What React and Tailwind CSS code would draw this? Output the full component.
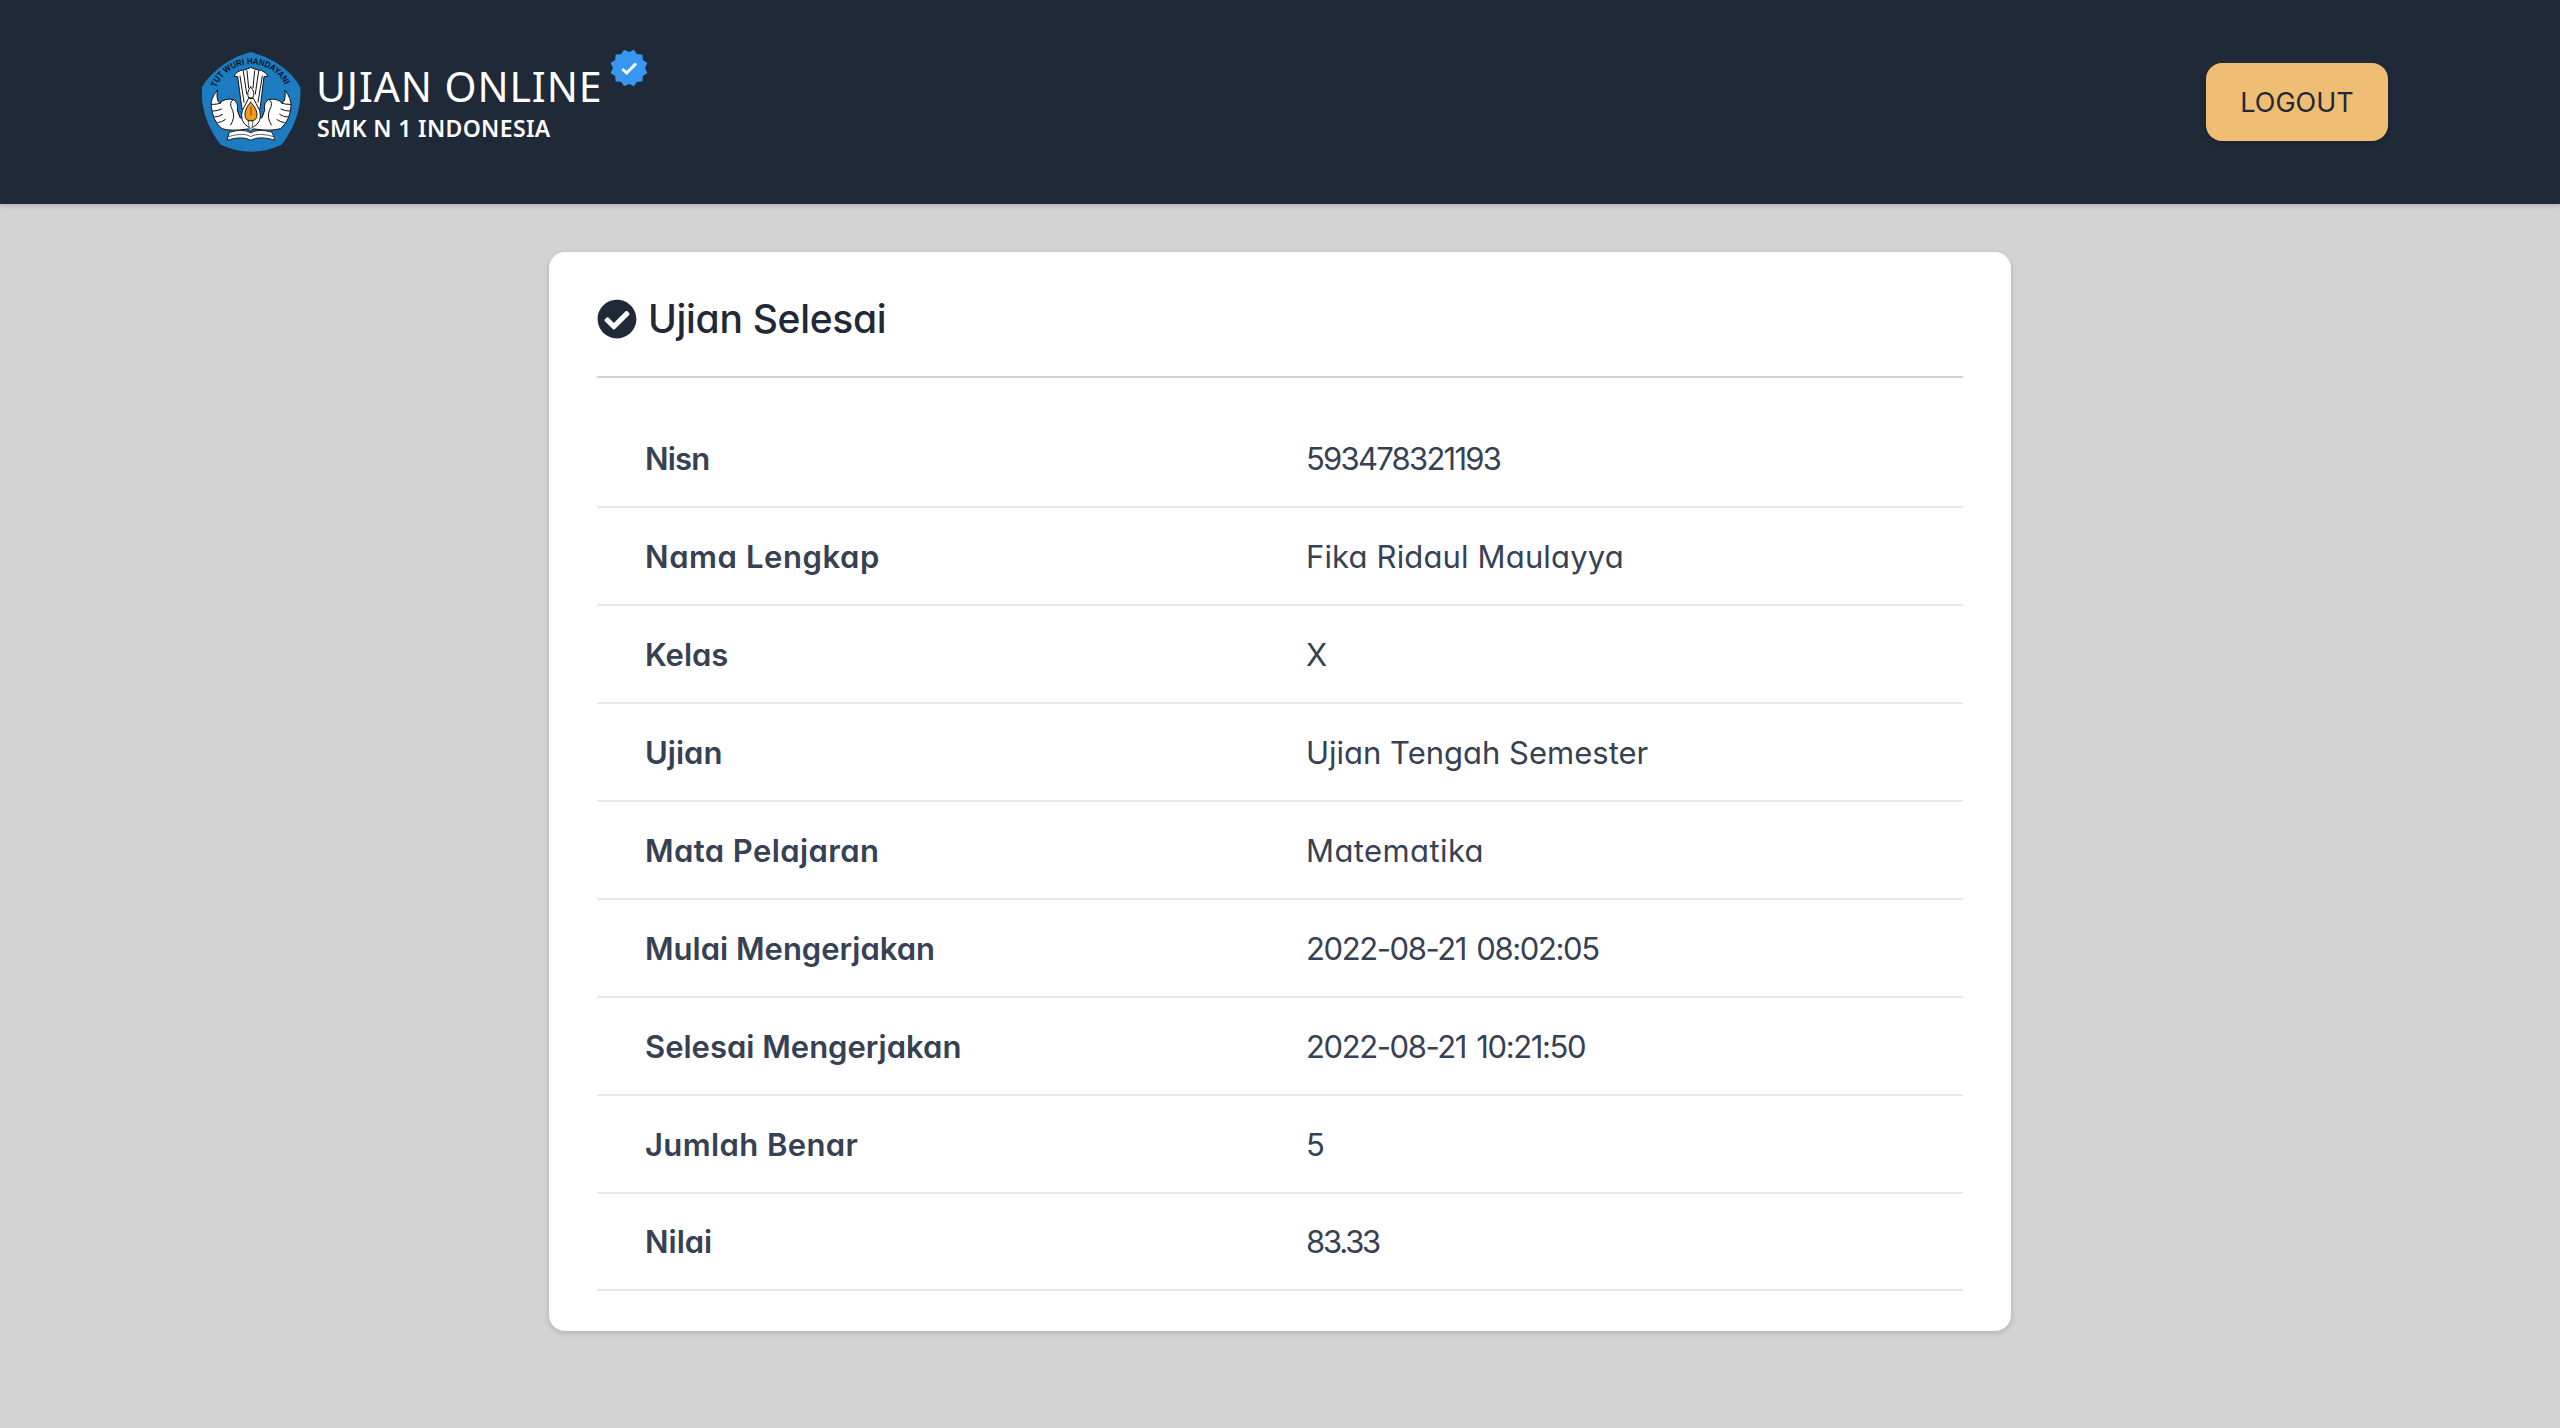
import React from "react";
import { FaCheckCircle } from "react-icons/fa";

const rows = [
  { label: "Nisn", value: "593478321193", labelFit: "tracking-[-0.8px]", valueFit: "tracking-[-1.75px]" },
  { label: "Nama Lengkap", value: "Fika Ridaul Maulayya", labelFit: "tracking-[0.6px]", valueFit: "tracking-[0.15px]" },
  { label: "Kelas", value: "X", labelFit: "", valueFit: "" },
  { label: "Ujian", value: "Ujian Tengah Semester", labelFit: "", valueFit: "" },
  { label: "Mata Pelajaran", value: "Matematika", labelFit: "tracking-[0.4px]", valueFit: "tracking-[0.4px]" },
  { label: "Mulai Mengerjakan", value: "2022-08-21 08:02:05", labelFit: "", valueFit: "tracking-[-1.4px] [word-spacing:3px]" },
  { label: "Selesai Mengerjakan", value: "2022-08-21 10:21:50", labelFit: "", valueFit: "tracking-[-1.4px] [word-spacing:3px]" },
  { label: "Jumlah Benar", value: "5", labelFit: "tracking-[0.4px]", valueFit: "" },
  { label: "Nilai", value: "83.33", labelFit: "", valueFit: "tracking-[-2.2px]" },
];

function Emblem() {
  return (
    <svg className="mb-[2px] h-[101px] w-[99px] shrink-0" viewBox="66 60 297 306" preserveAspectRatio="none">
      <path d="M212 63 Q285 82 334 132 Q352 152 361 170 Q366 262 305 344 Q260 365 212 365 Q168 365 122 344 Q60 262 66 170 Q76 150 94 132 Q142 82 212 63Z" fill="#1d7bc1" />
      <defs><path id="motto" d="M108 171 A113 113 0 0 1 318 171" /></defs>
      <text fontFamily="Liberation Sans, sans-serif" fontSize="27" fontWeight="700" fill="#0b1420">
        <textPath href="#motto" textLength="260" lengthAdjust="spacingAndGlyphs">TUT WURI HANDAYANI</textPath>
      </text>
      <g stroke="#111" strokeWidth="3" strokeLinejoin="round" strokeLinecap="round" fill="#fff">
        <path d="M162 136 Q168 122 182 119 L198 116 L212 110 L228 116 L244 119 Q258 124 264 136 L252 138 L240 236 L186 236 L173 138Z" />
        <path d="M180 136 L192 215 M190 120 L200 190 M201 120 L206 172 M224 120 L219 172 M236 120 L226 190 M247 136 L234 215" fill="none" />
        <path d="M112 179 Q90 205 94 228 Q97 270 125 295 Q150 304 205 296 L212 302 L220 296 Q275 304 302 295 Q330 270 333 228 Q335 205 315 179 Q318 212 306 218 Q292 202 266 207 Q250 216 254 240 L246 262 L212 270 L180 262 L172 240 Q176 216 160 207 Q134 202 120 218 Q108 212 112 179Z" />
        <path d="M94 222 Q112 222 122 218 M98 242 Q112 242 124 236 M104 260 Q116 260 128 252 M114 277 Q124 276 136 268 M333 222 Q315 222 305 218 M329 242 Q315 242 303 236 M323 260 Q311 260 299 252 M313 277 Q303 276 291 268" fill="none" />
        <path d="M160 207 Q144 216 158 240 Q166 262 152 284 M267 207 Q282 216 268 240 Q260 262 274 284" fill="none" />
        <path d="M205 205 L187 240 Q178 275 205 290 L220 290 Q248 275 239 240 L221 205Z" />
        <path d="M212 215 Q190 240 196 262 Q200 272 212 272 Q226 272 230 262 Q236 240 212 215Z" fill="#f39a1d" stroke="#222" />
        <path d="M213 230 L213 254" fill="none" stroke="#7a3d00" />
        <path d="M212 169 Q198 186 206 202 L218 202 Q228 186 212 169Z" />
        <path d="M206 272 L219 272 L216 294 L209 294Z" strokeWidth="2" />
        <path d="M149 306 Q190 294 212 308 Q236 294 276 306 L285 330 Q240 316 212 330 Q186 316 142 330Z" strokeWidth="2.5" />
        <path d="M146 319 Q190 306 212 319 Q236 306 280 319" fill="none" strokeWidth="2" />
      </g>
    </svg>
  );
}

// Twelve-pointed seal outline around a 120 × 120 box.
const sealPoints = Array.from({ length: 24 }, (_, i) => {
  const r = i % 2 ? 57 : 48;
  const a = (i * 15 * Math.PI) / 180;
  return `${(60 + r * Math.sin(a)).toFixed(1)},${(60 - r * Math.cos(a)).toFixed(1)}`;
}).join(" ");

function VerifiedBadge() {
  return (
    <svg className="h-10 w-10 shrink-0" viewBox="0 0 120 120">
      <polygon points={sealPoints} fill="#3897f0" />
      <path d="M40 63 L53 75 L81 47" fill="none" stroke="#fff" strokeWidth="9" />
    </svg>
  );
}

export default function App() {
  return (
    <div className="min-h-[1428px] bg-[#d3d3d3] font-['Inter',sans-serif] [font-feature-settings:'cv11']">
      <header className="flex h-[204px] items-center justify-between bg-[#1f2937] pr-[172px] pl-[202px] shadow-[0_2px_6px_rgba(0,0,0,0.1),0_2px_4px_rgba(0,0,0,0.06)]">
        <div className="flex items-center">
          <Emblem />
          <div className="ml-[15px] flex flex-col pt-px font-['Noto_Sans',sans-serif] text-white">
            <span className="text-[41px] leading-[50px] tracking-[0.9px]">UJIAN ONLINE</span>
            <span className="pt-px pl-px text-[23px] leading-8 font-semibold tracking-[0.35px]">SMK N 1 INDONESIA</span>
          </div>
          <div className="mb-[68px] ml-[7px]"><VerifiedBadge /></div>
        </div>
        <button className="h-[78px] w-[182px] rounded-2xl bg-[#f0bd74] pt-0.5 text-[27px] font-[430] text-[#1f2937] shadow-md">LOGOUT</button>
      </header>
      <main className="mx-auto mt-12 h-[1079px] w-[1462px] rounded-2xl bg-white px-12 shadow-[0_2px_6px_rgba(0,0,0,0.1),0_2px_4px_rgba(0,0,0,0.06)]">
        <div className="flex h-[126px] items-center border-b-2 border-gray-300 pt-2.5 text-[#1f2937]">
          <FaCheckCircle className="size-10" />
          <h1 className="ml-[11px] text-[39px] font-[450] tracking-[-0.3px]">Ujian Selesai</h1>
        </div>
        <dl className="pt-8 text-[31px] text-gray-700">
          {rows.map((r) => (
            <div key={r.label} className="flex h-[98px] items-center border-b-2 border-gray-200 pt-0.5 pl-12 last:h-[97px]">
              <dt className={`w-[661px] font-semibold ${r.labelFit}`}>{r.label}</dt>
              <dd className={`font-[370] ${r.valueFit}`}>{r.value}</dd>
            </div>
          ))}
        </dl>
      </main>
    </div>
  );
}
